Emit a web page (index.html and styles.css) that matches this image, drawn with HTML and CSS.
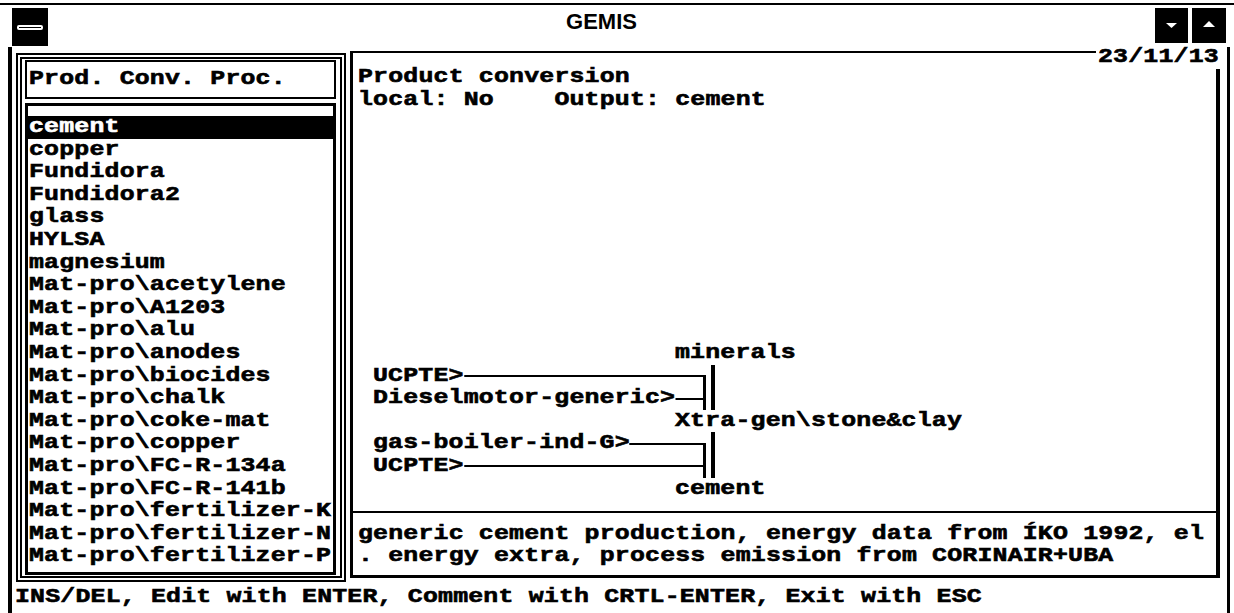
FILE: index.html
```html
<!DOCTYPE html>
<html lang="en">
<head>
    <meta charset="UTF-8">
    <title>GEMIS</title>
    <link rel="stylesheet" href="styles.css">
</head>
<body>
    <div class="screen">
        <div class="titlebar">
            <div class="sysmenu"><span></span></div>
            <div class="title">GEMIS</div>
            <div class="sizebtn">
                <svg width="33" height="35"><polygon points="11,15 22,15 16.5,20" fill="#fff"/></svg>
            </div>
            <div class="sizebtn">
                <svg width="34" height="35"><polygon points="11,19 23,19 17,13" fill="#fff"/></svg>
            </div>
        </div>
        <div class="window">
            <div class="main">
                <div class="left">
                    <div class="head"><span class="t">Prod. Conv. Proc.</span></div>
                    <ul class="list">
                        <li class="sel"><span class="t">cement</span></li>
                        <li><span class="t">copper</span></li>
                        <li><span class="t">Fundidora</span></li>
                        <li><span class="t">Fundidora2</span></li>
                        <li><span class="t">glass</span></li>
                        <li><span class="t">HYLSA</span></li>
                        <li><span class="t">magnesium</span></li>
                        <li><span class="t">Mat-pro\acetylene</span></li>
                        <li><span class="t">Mat-pro\A1203</span></li>
                        <li><span class="t">Mat-pro\alu</span></li>
                        <li><span class="t">Mat-pro\anodes</span></li>
                        <li><span class="t">Mat-pro\biocides</span></li>
                        <li><span class="t">Mat-pro\chalk</span></li>
                        <li><span class="t">Mat-pro\coke-mat</span></li>
                        <li><span class="t">Mat-pro\copper</span></li>
                        <li><span class="t">Mat-pro\FC-R-134a</span></li>
                        <li><span class="t">Mat-pro\FC-R-141b</span></li>
                        <li><span class="t">Mat-pro\fertilizer-K</span></li>
                        <li><span class="t">Mat-pro\fertilizer-N</span></li>
                        <li><span class="t">Mat-pro\fertilizer-P</span></li>
                    </ul>
                </div>
                <div class="right">
                    <div class="date"><span class="t">23/11/13</span></div>
                    <div class="info">
                        <div><span class="t">Product conversion</span></div>
                        <div><span class="t">local: No    Output: cement</span></div>
                    </div>
                    <div class="diagram">
                        <div class="node"><span class="t">minerals</span></div>
                        <div class="group">
                            <div class="inputs">
                                <div class="in"><span class="t">UCPTE&gt;</span><i></i></div>
                                <div class="in"><span class="t">Dieselmotor-generic&gt;</span><i></i></div>
                            </div>
                            <div class="bus"></div>
                        </div>
                        <div class="node"><span class="t">Xtra-gen\stone&amp;clay</span></div>
                        <div class="group">
                            <div class="inputs">
                                <div class="in"><span class="t">gas-boiler-ind-G&gt;</span><i></i></div>
                                <div class="in"><span class="t">UCPTE&gt;</span><i></i></div>
                            </div>
                            <div class="bus"></div>
                        </div>
                        <div class="node"><span class="t">cement</span></div>
                    </div>
                    <div class="comment">
                        <div><span class="t">generic cement production, energy data from ÍKO 1992, el</span></div>
                        <div><span class="t">. energy extra, process emission from CORINAIR+UBA</span></div>
                    </div>
                </div>
            </div>
            <div class="status"><span class="t">INS/DEL, Edit with ENTER, Comment with CRTL-ENTER, Exit with ESC</span></div>
        </div>
    </div>
</body>
</html>
```

FILE: styles.css
```css
body {
    margin: 0;
    background-color: #fff;
}
.screen {
    width: 1234px;
    height: 613px;
    overflow: hidden;
    background-color: #fff;
    color: #000;
    font-family: 'Liberation Mono', 'DejaVu Sans Mono', monospace;
    font-weight: bold;
    font-size: 19.9px;
    letter-spacing: 0.15px;
    line-height: 22.6px;
    -webkit-text-stroke: 0.6px currentColor;
}
/* VGA text is wide: stretch each monospace run so one cell is ~15.1px */
.t {
    display: inline-block;
    white-space: pre;
    transform: scaleX(1.25);
    transform-origin: 0 0;
}
.titlebar {
    display: flex;
    align-items: flex-start;
    height: 42px;
    margin-top: 3px;
    padding: 0 8px 0 12px;
    border-top: 2px solid #000;
}
.sysmenu {
    width: 36px;
    height: 38px;
    margin-top: 3px;
    background-color: #000;
    display: flex;
    align-items: center;
    justify-content: center;
}
.sysmenu span {
    width: 22px;
    height: 1px;
    background-color: #000;
    border: 2px solid #fff;
    border-radius: 2px;
}
.title {
    flex: 1;
    text-align: center;
    font-family: 'Liberation Sans', Arial, sans-serif;
    font-size: 22px;
    letter-spacing: 0;
    line-height: 34px;
    -webkit-text-stroke: 0;
}
.sizebtn {
    width: 33px;
    height: 35px;
    margin-top: 3px;
    background-color: #000;
}
.sizebtn + .sizebtn {
    width: 34px;
    margin-left: 4px;
}
.sizebtn svg {
    display: block;
}
.window {
    height: 566px;
    margin: 0 4px 0 8px;
    border-left: 4px solid #000;
    border-right: 3px solid #000;
}
.main {
    display: flex;
    align-items: flex-start;
    height: 535px;
}
.left {
    box-sizing: border-box;
    width: 330px;
    height: 529px;
    margin: 6px 0 0 4px;
    padding: 1px 4px 1px 3px;
    border: 6px double #000;
}
.head {
    box-sizing: border-box;
    height: 39px;
    padding: 6px 0 0 2px;
    border: 2px solid #000;
}
.list {
    list-style: none;
    margin: 4px 0 0;
    padding: 10px 0 4px;
    border: 3px solid #000;
    overflow: hidden;
}
.list li {
    height: 22.6px;
    padding-left: 1px;
}
.list .sel {
    background-color: #000;
    color: #fff;
}
.right {
    position: relative;
    box-sizing: border-box;
    width: 870px;
    height: 527px;
    margin: 4px 0 0 4px;
    border-style: solid;
    border-color: #000;
    border-width: 2px 4px 3px 3px;
    display: flex;
    flex-direction: column;
}
.date {
    position: absolute;
    top: -6.6px;
    right: -6px;
    width: 124px;
    padding-left: 2px;
    background-color: #fff;
}
.info {
    padding: 13px 0 0 5px;
}
.diagram {
    flex: 1;
    display: flex;
    flex-direction: column;
    justify-content: flex-end;
    padding: 0 0 10.3px 5px;
}
.node {
    height: 22.6px;
    margin-left: 317px;
}
.group {
    display: flex;
    height: 45.2px;
}
.inputs {
    position: relative;
    width: 332.6px;
    margin-left: 15.1px;
}
.inputs::after {
    content: '';
    position: absolute;
    right: 0;
    top: 10.3px;
    bottom: 0;
    width: 3px;
    background-color: #000;
}
.in {
    display: flex;
    align-items: center;
    height: 22.6px;
}
.in .t {
    background-color: #fff;
}
.in i {
    flex: 1;
    height: 2px;
    background-color: #000;
}
.bus {
    width: 4px;
    margin-left: 5px;
    background-color: #000;
}
.comment {
    padding: 10.3px 0 7px 5px;
    border-top: 2px solid #000;
}
.status {
    padding: 4.4px 0 0 3.4px;
}
```
